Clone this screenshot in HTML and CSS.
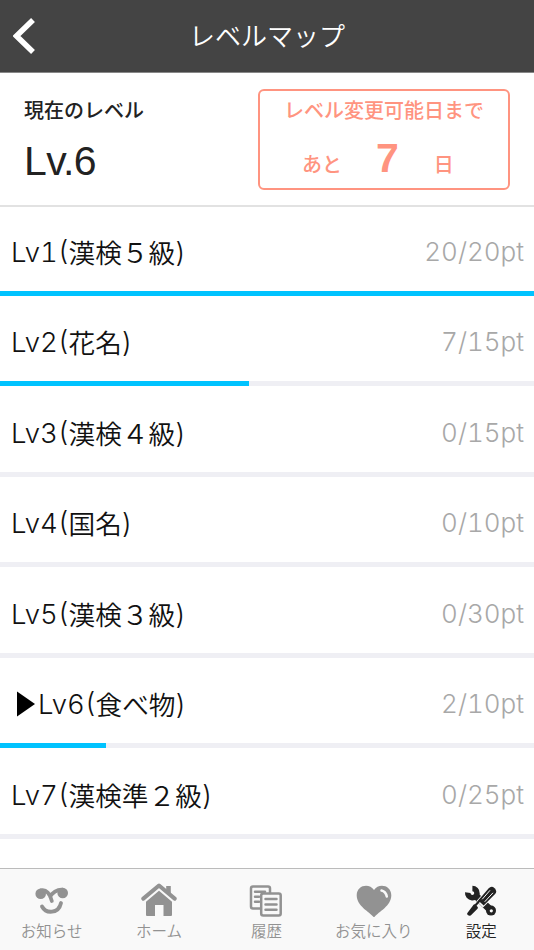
FILE: index.html
```html
<!DOCTYPE html>
<html lang="ja">
<head>
  <meta charset="UTF-8" />
  <meta name="viewport" content="width=device-width, initial-scale=1.0"/>
  <title>レベルマップ</title>
  <link rel="stylesheet" href="styles.css">
</head>
<body>
  <header>
    <a class="back" href="#" aria-label="戻る">
      <svg width="22" height="36" viewBox="0 0 22 36"><path d="M20 2 L3.5 18 L20 34" fill="none" stroke="#fff" stroke-width="5.5"/></svg>
    </a>
    <h1>レベルマップ</h1>
  </header>

  <section class="summary">
    <div class="current">
      <p class="label">現在のレベル</p>
      <p class="value">Lv.6</p>
    </div>
    <div class="countdown">
      <p class="label">レベル変更可能日まで</p>
      <p class="days"><span>あと</span><strong>7</strong><span>日</span></p>
    </div>
  </section>

  <ul class="levels">
    <li>
      <div class="row"><span class="name"><span class="num">Lv1(</span>漢検５級<span class="num">)</span></span><span class="pt">20/20pt</span></div>
      <div class="bar"><div class="fill" style="width: 100%"></div></div>
    </li>
    <li>
      <div class="row"><span class="name"><span class="num">Lv2(</span>花名<span class="num">)</span></span><span class="pt">7/15pt</span></div>
      <div class="bar"><div class="fill" style="width: 46.7%"></div></div>
    </li>
    <li>
      <div class="row"><span class="name"><span class="num">Lv3(</span>漢検４級<span class="num">)</span></span><span class="pt">0/15pt</span></div>
      <div class="bar"></div>
    </li>
    <li>
      <div class="row"><span class="name"><span class="num">Lv4(</span>国名<span class="num">)</span></span><span class="pt">0/10pt</span></div>
      <div class="bar"></div>
    </li>
    <li>
      <div class="row"><span class="name"><span class="num">Lv5(</span>漢検３級<span class="num">)</span></span><span class="pt">0/30pt</span></div>
      <div class="bar"></div>
    </li>
    <li>
      <div class="row"><span class="name"><svg class="marker" width="18" height="26" viewBox="0 0 18 26"><path d="M0 0.5 L18 13 L0 25.5 Z"/></svg><span class="num">Lv6(</span>食べ物<span class="num">)</span></span><span class="pt">2/10pt</span></div>
      <div class="bar"><div class="fill" style="width: 19.9%"></div></div>
    </li>
    <li>
      <div class="row"><span class="name"><span class="num">Lv7(</span>漢検準２級<span class="num">)</span></span><span class="pt">0/25pt</span></div>
      <div class="bar"></div>
    </li>
  </ul>

  <nav>
    <a href="#">
      <svg width="36" height="36" viewBox="0 0 36 36">
        <circle cx="6.7" cy="12.7" r="5.3"/><circle cx="28.7" cy="12" r="5.3"/>
        <path d="M7 9.4 C12 8 16.5 13 17.8 20 M16.2 15.5 C18 12 23 8.2 28.6 8.7" fill="none" stroke="currentColor" stroke-width="3.8" stroke-linecap="round"/>
        <path d="M8 25.5 C12 33 24.5 33 27 22" fill="none" stroke="currentColor" stroke-width="3.8" stroke-linecap="round"/>
      </svg>
      <span>お知らせ</span>
    </a>
    <a href="#">
      <svg width="36" height="36" viewBox="0 0 36 36">
        <path d="M2.3 17.6 L18 4.5 L33.7 17.6" fill="none" stroke="currentColor" stroke-width="4" stroke-linecap="round" stroke-linejoin="round"/>
        <path d="M25.2 5 H29.8 V14 L25.2 10 Z"/>
        <path d="M18 9.8 L31 20.8 V34 Q31 35 30 35 H22.5 V24 H14 V35 H6 Q5 35 5 34 V20.8 Z"/>
      </svg>
      <span>ホーム</span>
    </a>
    <a href="#">
      <svg width="36" height="36" viewBox="0 0 36 36" fill="none" stroke="currentColor" stroke-width="2.5" stroke-linecap="round">
        <path d="M12.5 27.5 H5 Q3 27.5 3 25.5 V7.5 Q3 5.5 5 5.5 H20 Q22 5.5 22 7.5 V12 M7 10.7 H17 M7 15.8 H11 M7 20.8 H11"/>
        <rect x="13.2" y="12.5" width="19.5" height="22" rx="2"/>
        <path d="M17.5 18 H28.5 M17.5 23.5 H28.5 M17.5 28.8 H28.5"/>
      </svg>
      <span>履歴</span>
    </a>
    <a href="#">
      <svg width="36" height="36" viewBox="0 0 36 36">
        <path d="M18 36.5 C14 31 0.7 25.5 0.7 14.3 C0.7 3.8 13.5 1.8 18 9 C22.5 1.8 35.3 3.8 35.3 14.3 C35.3 25.5 22 31 18 36.5 Z"/>
        <path d="M25.5 9.5 Q29.8 10.5 30.8 15.5" fill="none" stroke="#f9f9f9" stroke-width="2.5" stroke-linecap="round"/>
      </svg>
      <span>お気に入り</span>
    </a>
    <a href="#" class="active">
      <svg width="36" height="36" viewBox="0 0 36 36">
        <path d="M9.4 7.5 A4.6 4.6 0 1 1 4.8 11.6" fill="none" stroke="currentColor" stroke-width="5.6"/>
        <path d="M13 15 L28 29.6" stroke="currentColor" stroke-width="7"/>
        <circle cx="28" cy="29.6" r="5"/>
        <circle cx="28.3" cy="29.8" r="1.6" fill="#f9f9f9"/>
        <path d="M16 20 L26 8.5 Q28.5 5.5 31 7.6 Q33.5 10 31.5 12.5 L20 24 Z" stroke="#f9f9f9" stroke-width="3.6"/>
        <path d="M5.5 32.8 L11.5 24.8 L13.5 26.8 L7 33.3 Z" stroke="currentColor" stroke-width="2.8" stroke-linejoin="round"/>
        <path d="M11 26 L18 18" stroke="currentColor" stroke-width="2"/>
        <path d="M15.2 19.5 L25.5 7.4 Q28.5 4.4 31.6 7.2 Q34.6 10.2 32.1 13 L20.7 24.5 Z"/>
        <path d="M19.2 18.3 L27 9.3 M21.7 20.8 L30 11.8" stroke="#f9f9f9" stroke-width="1"/>
      </svg>
      <span>設定</span>
    </a>
  </nav>
</body>
</html>
```
FILE: styles.css
```css
* {
  box-sizing: border-box;
}

body {
  font-family: "Noto Sans CJK JP", sans-serif;
  background: #fff;
  margin: 0;
  color: #111;
  height: 950px;
  display: flex;
  flex-direction: column;
  overflow: hidden;
}

p, h1, ul {
  margin: 0;
  padding: 0;
}

header {
  height: 73px;
  flex-shrink: 0;
  background: #444;
  border-bottom: 1px solid #888;
  display: grid;
  grid-template-columns: 40px 1fr 40px;
  align-items: center;
}

.back {
  padding-left: 13px;
}

.back svg {
  display: block;
}

h1 {
  color: #fff;
  font-size: 26px;
  font-weight: 350;
  line-height: 40px;
  margin-top: -3px;
  text-align: center;
}

.summary {
  height: 134px;
  flex-shrink: 0;
  display: flex;
  justify-content: space-between;
  padding: 16px 24px 0;
  border-bottom: 2px solid #e2e2e2;
}

.label {
  font-size: 20px;
  font-weight: 500;
  line-height: 30px;
}

.current {
  padding-top: 6px;
  color: #222;
}

.value {
  font-family: "Liberation Sans", sans-serif;
  font-size: 41px;
  line-height: 46px;
  margin-top: 13px;
  letter-spacing: -0.6px;
}

.countdown {
  width: 252px;
  height: 101px;
  border: 2px solid #ff9480;
  border-radius: 6px;
  color: #ff9480;
  padding-top: 4px;
  text-align: center;
}

.days {
  display: flex;
  align-items: baseline;
  font-size: 20px;
  font-weight: 500;
  line-height: 46px;
  margin-top: 10px;
  padding-left: 42px;
}

.days strong {
  font-family: "Liberation Sans", sans-serif;
  font-size: 41px;
  margin: 0 35px 0 34px;
}

.levels {
  list-style: none;
  flex: 1;
  margin-top: -2px;
}

.levels li {
  height: 90.5px;
  display: flex;
  flex-direction: column;
}

.row {
  flex: 1;
  display: flex;
  justify-content: space-between;
  align-items: center;
  padding: 8px 10px 0 11px;
  font-size: 26.7px;
  font-weight: 350;
  line-height: 40px;
}

.name {
  display: flex;
  align-items: center;
}

.num {
  font-family: Inter, sans-serif;
  font-size: 27.5px;
  font-weight: 300;
  font-variant-numeric: tabular-nums;
}

.marker {
  margin: 0 3px 0 6px;
}

.pt {
  font-family: Inter, sans-serif;
  font-size: 26px;
  font-weight: 300;
  font-variant-numeric: tabular-nums;
  color: #a8a8a8;
}

.bar {
  height: 5px;
  background: #efeff4;
}

.fill {
  height: 100%;
  background: #00c3ff;
}

nav {
  height: 82px;
  flex-shrink: 0;
  display: grid;
  grid-template-columns: repeat(5, 107.4px);
  margin-left: -2px;
  background: #f9f9f9;
  border-top: 1px solid #bbb;
}

nav a {
  display: flex;
  flex-direction: column;
  align-items: center;
  padding-top: 12px;
  color: #929292;
  fill: currentColor;
  font-size: 15.5px;
  font-weight: 350;
  line-height: 24px;
  text-decoration: none;
}

nav span {
  margin-top: 1px;
}

nav .active {
  color: #222;
}
```
